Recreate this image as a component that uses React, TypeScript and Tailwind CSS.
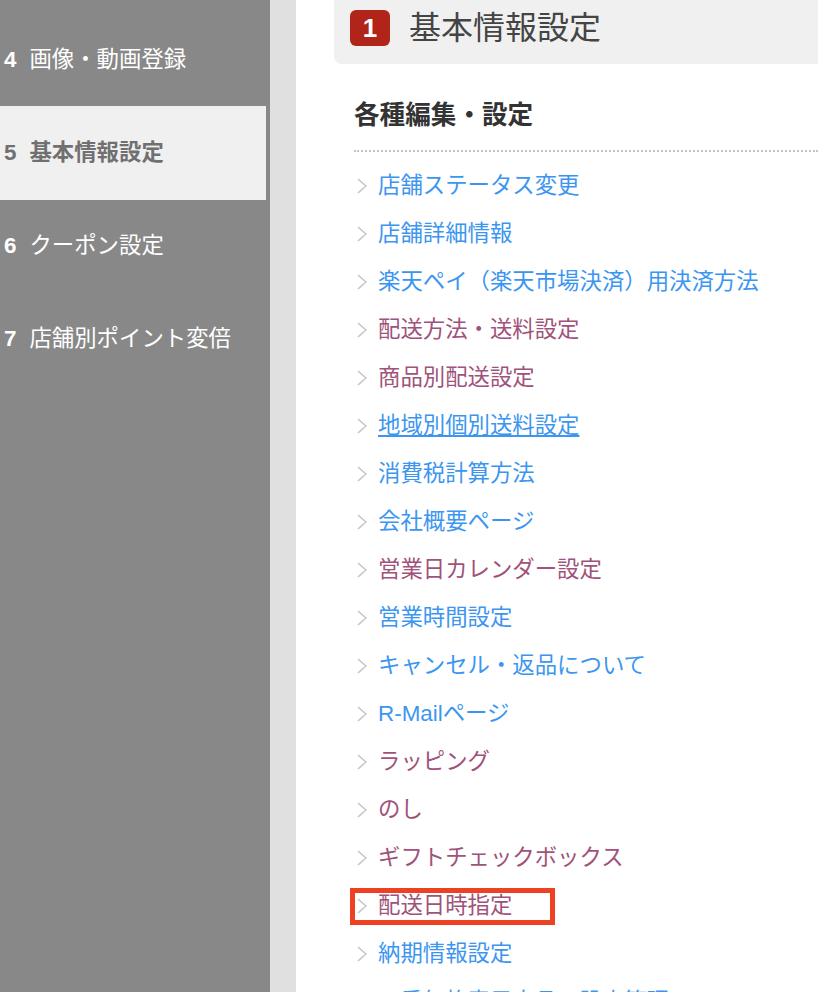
const sideItems = [
  { num: '4', label: '画像・動画登録' },
  { num: '5', label: '基本情報設定', active: true },
  { num: '6', label: 'クーポン設定' },
  { num: '7', label: '店舗別ポイント変倍' },
]

const links = [
  { label: '店舗ステータス変更' },
  { label: '店舗詳細情報' },
  { label: '楽天ペイ（楽天市場決済）用決済方法' },
  { label: '配送方法・送料設定', visited: true },
  { label: '商品別配送設定', visited: true },
  { label: '地域別個別送料設定', hover: true },
  { label: '消費税計算方法' },
  { label: '会社概要ページ' },
  { label: '営業日カレンダー設定', visited: true },
  { label: '営業時間設定' },
  { label: 'キャンセル・返品について' },
  { label: 'R-Mailページ' },
  { label: 'ラッピング', visited: true },
  { label: 'のし', visited: true },
  { label: 'ギフトチェックボックス', visited: true },
  { label: '配送日時指定', visited: true, boxed: true },
  { label: '納期情報設定' },
  { label: '二重価格表示文言の設定管理' },
]

function Chevron() {
  return (
    <svg width="10" height="16" viewBox="0 0 10 16" fill="none" className="-mt-px shrink-0">
      <path d="M1 1l8 7-8 7" stroke="#c4c4c4" strokeWidth="1.5" />
    </svg>
  )
}

export default function App() {
  return (
    <div className="flex h-[992px] w-[818px] overflow-hidden bg-white font-['Liberation_Sans','Noto_Sans_CJK_JP',sans-serif]">
      {/* Sidebar */}
      <div className="w-[270px] shrink-0 bg-[#888888] pt-[13px]">
        {sideItems.map((item) => (
          <div
            key={item.num}
            className={`flex w-[266px] items-center gap-[13px] pl-1 text-[22.4px] ${
              item.active ? '-mb-px h-[94px] bg-[#f0f0f0] font-bold text-[#707070]' : 'h-[93px] text-white'
            }`}
          >
            <span className="font-bold">{item.num}</span>
            <span>{item.label}</span>
          </div>
        ))}
      </div>

      <div className="w-[26px] shrink-0 bg-[#e0e0e0]" />

      {/* Main */}
      <div className="min-w-0 flex-1 pl-[38px]">
        <div className="flex h-16 items-center gap-[19px] rounded-bl-lg bg-[#f0f0f0] pb-[8px] pl-4">
          <span className="flex h-9 w-10 items-center justify-center rounded-md bg-[#b0241a] text-[26px] font-bold text-white">
            1
          </span>
          <h1 className="text-[32px] leading-none text-[#444444]">基本情報設定</h1>
        </div>

        <h2 className="mt-[35px] ml-5 text-[25.6px] leading-[32px] font-bold text-[#333333]">各種編集・設定</h2>
        <div className="mt-[19px] ml-5 border-t-2 border-dotted border-[#c4c4c4]" />

        <ul className="mt-[10px] ml-[23px]">
          {links.map((link) => (
            <li key={link.label} className="relative flex h-12 items-center gap-[11px]">
              {link.boxed && (
                <span className="absolute top-[6px] -left-[7px] h-[37px] w-[205px] border-[5px] border-[#ee4023]" />
              )}
              <Chevron />
              <span
                className={`relative text-[22.4px] whitespace-nowrap ${
                  link.visited ? 'text-[#a0527a]' : 'text-[#3c96f0]'
                } ${link.hover ? 'underline' : ''}`}
              >
                {link.label}
              </span>
            </li>
          ))}
        </ul>
      </div>
    </div>
  )
}
